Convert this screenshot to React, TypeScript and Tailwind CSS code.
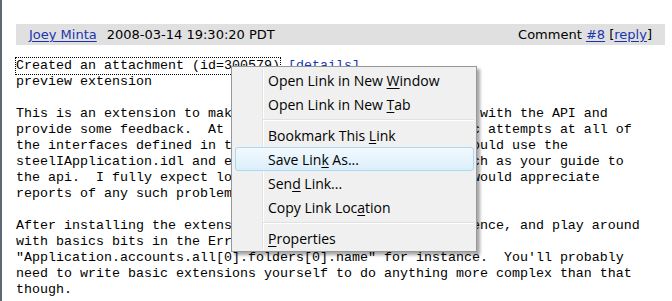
import React from 'react';

const lines = [
    'preview extension',
    '',
    'This is an extension to make it easier for people to play with the API and',
    'provide some feedback.  At the moment it simply does basic attempts at all of',
    'the interfaces defined in the .idl files.  Ideally, one would use the',
    'steelIApplication.idl and examples in the source tree, such as your guide to',
    'the api.  I fully expect lots of bugs to be found, and I would appreciate',
    'reports of any such problems.',
    '',
    'After installing the extension, enable the console preference, and play around',
    'with basics bits in the Error Console, e.g.',
    '"Application.accounts.all[0].folders[0].name" for instance.  You\'ll probably',
    'need to write basic extensions yourself to do anything more complex than that',
    'though.',
];

type Item = { before: string; key: string; after: string; active?: boolean } | 'sep';

const menu: Item[] = [
    { before: 'Open Link in New ', key: 'W', after: 'indow' },
    { before: 'Open Link in New ', key: 'T', after: 'ab' },
    'sep',
    { before: 'Bookmark This ', key: 'L', after: 'ink' },
    { before: 'Save Lin', key: 'k', after: ' As...', active: true },
    { before: 'Sen', key: 'd', after: ' Link...' },
    { before: 'Copy Link Loc', key: 'a', after: 'tion' },
    'sep',
    { before: '', key: 'P', after: 'roperties' },
];

const ContextMenu: React.FC = () => (
    <div className="absolute left-[229px] top-[66px] w-[246px] border border-[#979797] bg-[#f0f0f0] py-[1px] pl-[3px] pr-[2px] shadow-[3px_3px_3px_rgba(0,0,0,0.35)] font-['Open_Sans',sans-serif] text-[14px] text-black">
        {/* gutter line */}
        <div className="absolute left-[30px] top-[2px] bottom-[2px] w-[2px] border-l border-[#e2e3e3] border-r border-r-white" />
        {menu.map((item, i) =>
            item === 'sep' ? (
                <div key={i} className="relative h-[7px] flex flex-col justify-center ml-[28px]">
                    <div className="h-px bg-[#e0e0e0]" />
                    <div className="h-px bg-white" />
                </div>
            ) : (
                <div
                    key={i}
                    className={`relative h-[24px] flex items-center pl-[32px] whitespace-pre rounded-[3px] border ${
                        item.active
                            ? 'border-[#a9d9f0] bg-gradient-to-b from-[#f3f9fd] to-[#daeffb]'
                            : 'border-transparent'
                    }`}
                >
                    {item.before}
                    <span className="underline underline-offset-2">{item.key}</span>
                    {item.after}
                </div>
            )
        )}
    </div>
);

export default function App() {
    const link = 'text-[#1a35b0] underline underline-offset-2';
    return (
        <div className="relative w-[672px] h-[301px] overflow-hidden bg-white border-l-2 border-[#5f6875]">
            <div className="pt-[24px] pl-[14px] pr-[7px]">
                <div className="h-[21px] flex items-center justify-between bg-[#e0e0e0] px-[13px] font-['DejaVu_Sans',Verdana,sans-serif] text-[13px] text-black">
                    <div className="flex items-center gap-[10px]">
                        <a className={link}>Joey Minta</a>
                        <span>2008-03-14 19:30:20 PDT</span>
                    </div>
                    <div className="whitespace-pre">
                        Comment <a className={link}>#8</a> [<a className={link}>reply</a>]
                    </div>
                </div>
                <pre className="mt-[13px] font-['Liberation_Mono','Courier_New',monospace] text-[13.33px] leading-[16px] text-black">
                    <span className="inline-block outline outline-dotted outline-black">Created an attachment (id=300579)</span>{' '}
                    <span className="text-[#1a35b0]">[details]</span>
                    {'\n'}
                    {lines.join('\n')}
                </pre>
            </div>
            <ContextMenu />
        </div>
    );
}
